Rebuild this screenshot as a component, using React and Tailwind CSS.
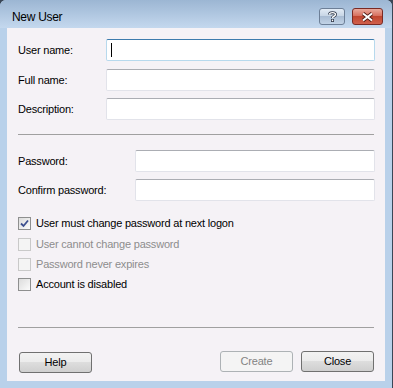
import React from "react"

const font = { fontFamily: '"Liberation Sans", Arial, sans-serif' }

// text field, win7 look
const Field = ({ width, focused }) => (
  <div
    className={
      "h-[22px] bg-white rounded-[2px] border relative " +
      (focused
        ? "border-[#b7d9ed] border-t-[#3d7bad]"
        : "border-[#e2e3ea] border-t-[#abadb3]")
    }
    style={{ width }}
  >
    {focused && <div className="absolute left-[4px] top-[3px] w-[1px] h-[14px] bg-black" />}
  </div>
)

const Row = ({ label, labelWidth, fieldWidth, focused, className = "" }) => (
  <div className={"flex items-center " + className}>
    <span className="text-[11px] tracking-[-0.2px] text-black" style={{ width: labelWidth }}>
      {label}
    </span>
    <Field width={fieldWidth} focused={focused} />
  </div>
)

const Check = ({ label, checked, disabled, className = "" }) => (
  <div className={"flex items-center gap-[5px] h-[13px] " + className}>
    <div
      className={
        "w-[13px] h-[13px] border flex items-center justify-center " +
        (disabled
          ? "border-[#c9c9c9] bg-[#f4f4f4]"
          : "border-[#8e8f8f] bg-gradient-to-br from-[#dcdcdc] to-[#fbfbfb]")
      }
    >
      {checked && (
        <svg width="9" height="9" viewBox="0 0 9 9">
          <path d="M1 4.5 L3.5 7 L8 1.5" fill="none" stroke="#3c4f8f" strokeWidth="1.8" />
        </svg>
      )}
    </div>
    <span className={"text-[11px] tracking-[-0.2px] " + (disabled ? "text-[#8d8d8d]" : "text-black")}>
      {label}
    </span>
  </div>
)

const Button = ({ children, disabled }) => (
  <button
    className={
      "w-[73px] h-[21px] rounded-[3px] border text-[11px] tracking-[-0.2px] " +
      (disabled
        ? "border-[#adb2b5] bg-[#f4f4f4] text-[#838383]"
        : "border-[#707070] text-black bg-[linear-gradient(#f2f2f2_0%,#ebebeb_50%,#dddddd_50%,#cfcfcf_100%)]")
    }
  >
    {children}
  </button>
)

export default function App() {
  return (
    <div className="w-[393px] h-[388px] bg-[#3a4656]" style={font}>
      <div className="w-[392px] h-[388px] rounded-tl-[6px] rounded-tr-[6px] bg-[#b9d1ea] flex flex-col">
        {/* title bar */}
        <div className="h-[28px] rounded-tl-[6px] rounded-tr-[6px] bg-gradient-to-b from-[#9cb6d3] to-[#c4d8ee] flex items-start pl-[12px] pr-[9px]">
          <span className="mt-[8px] text-[12px] tracking-[-0.3px] text-black">New User</span>
          <div className="ml-auto mt-[8px] flex gap-[7px]">
            <div className="w-[26px] h-[17px] rounded-[3px] border border-[#6d7f97] bg-[linear-gradient(#e2ebf5_0%,#c8d6e6_45%,#a9bcd3_50%,#c2d3e6_100%)] flex items-center justify-center">
              <svg width="9" height="11" viewBox="0 0 9 11">
                <path d="M1.5 3.5 C1.5 1 7.5 1 7.5 3.5 C7.5 5.5 4.5 5 4.5 7" fill="none" stroke="#30394a" strokeWidth="3" />
                <path d="M1.5 3.5 C1.5 1 7.5 1 7.5 3.5 C7.5 5.5 4.5 5 4.5 7" fill="none" stroke="#fff" strokeWidth="1.4" />
                <rect x="3" y="8" width="3" height="3" fill="#30394a" />
                <rect x="3.8" y="8.6" width="1.4" height="1.6" fill="#fff" />
              </svg>
            </div>
            <div className="w-[31px] h-[17px] rounded-[3px] border border-[#7a2a24] bg-[linear-gradient(#e9a99c_0%,#d7705f_45%,#c0452f_50%,#d0604c_100%)] flex items-center justify-center">
              <svg width="13" height="10" viewBox="0 0 13 10">
                <path d="M2 1.5 L11 8.5 M11 1.5 L2 8.5" stroke="#4a1a14" strokeWidth="3.6" />
                <path d="M2 1.5 L11 8.5 M11 1.5 L2 8.5" stroke="#fff" strokeWidth="2" />
              </svg>
            </div>
          </div>
        </div>

        {/* client area */}
        <div className="ml-[7px] w-[378px] h-[353px] bg-[#f5f2f6] pl-[11px] pr-[10px] flex flex-col">
          <Row className="mt-[11px]" label="User name:" labelWidth={88} fieldWidth={269} focused />
          <Row className="mt-[8px]" label="Full name:" labelWidth={88} fieldWidth={269} />
          <Row className="mt-[7px]" label="Description:" labelWidth={88} fieldWidth={269} />

          <div className="mt-[14px] h-[2px] border-t border-[#a0a0a0] border-b-white w-[356px]" />

          <Row className="mt-[14px]" label="Password:" labelWidth={117} fieldWidth={240} />
          <Row className="mt-[7px]" label="Confirm password:" labelWidth={117} fieldWidth={240} />

          <Check className="mt-[16px]" label="User must change password at next logon" checked />
          <Check className="mt-[8px]" label="User cannot change password" disabled />
          <Check className="mt-[7px]" label="Password never expires" disabled />
          <Check className="mt-[7px]" label="Account is disabled" />

          <div className="mt-[36px] h-[2px] border-t border-[#a0a0a0] w-[356px]" />

          <div className="mt-[20px] flex items-center">
            <div className="ml-[1px]">
              <Button>Help</Button>
            </div>
            <div className="ml-auto mr-[1px] flex gap-[8px]">
              <Button disabled>Create</Button>
              <Button>Close</Button>
            </div>
          </div>
        </div>
      </div>
    </div>
  )
}
